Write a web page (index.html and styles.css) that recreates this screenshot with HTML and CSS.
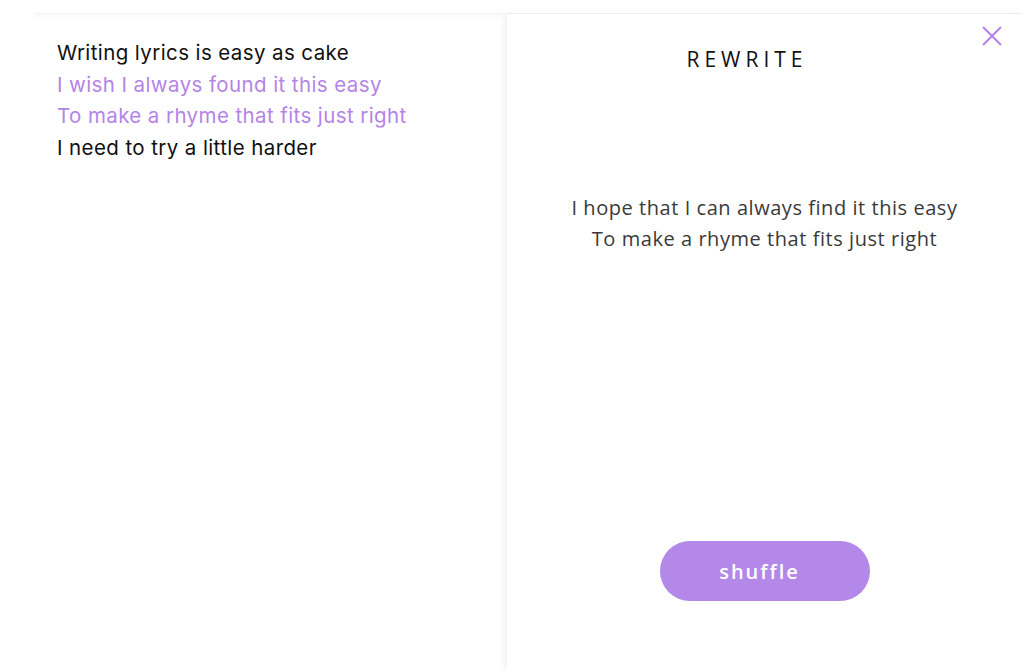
FILE: index.html
```html
<!DOCTYPE html>
<html>
<head>
<meta charset="utf-8">
<link rel="stylesheet" href="styles.css">
</head>
<body>
<div class="app">
  <section class="editor">
    <p class="line">Writing lyrics is easy as cake</p>
    <p class="line selected">I wish I always found it this easy</p>
    <p class="line selected">To make a rhyme that fits just right</p>
    <p class="line">I need to try a little harder</p>
  </section>
  <aside class="rewrite">
    <header class="rewrite-header">
      <h1 class="rewrite-title">REWRITE</h1>
      <button class="close" aria-label="Close">
        <svg width="20" height="20" viewBox="0 0 20 20"><path d="M1 1 L19 19 M19 1 L1 19" stroke="#b183e6" stroke-width="2" fill="none"/></svg>
      </button>
    </header>
    <div class="suggestion">
      <p>I hope that I can always find it this easy</p>
      <p>To make a rhyme that fits just right</p>
    </div>
    <div class="actions">
      <button class="shuffle">shuffle</button>
    </div>
  </aside>
</div>
</body>
</html>
```

FILE: styles.css
```css
html, body {
  margin: 0;
  padding: 0;
  background: #fff;
  height: 100%;
  overflow: hidden;
}
.app {
  display: flex;
  padding: 13px 0 0 35px;
  height: 672px;
  box-sizing: border-box;
}
.editor {
  width: 472px;
  padding: 24px 0 0 22px;
  box-sizing: border-box;
  box-shadow: inset 0 8px 8px -8px rgba(0,0,0,0.08);
  font-family: Inter, "Liberation Sans", sans-serif;
  font-size: 20.5px;
  color: #111;
}
.line {
  margin: 0;
  line-height: 31.5px;
  letter-spacing: 0.4px;
}
.line.selected {
  color: #b584e6;
}
.rewrite {
  width: 515px;
  border-top: 1px solid #ececec;
  box-shadow: -5px 0 7px -3px rgba(0,0,0,0.07);
  display: flex;
  flex-direction: column;
  font-family: "Open Sans", Lato, sans-serif;
}
.rewrite-header {
  display: flex;
  align-items: flex-start;
  padding-right: 20px;
}
.rewrite-title {
  flex: 1;
  margin: 0;
  padding: 31px 0 0 5px;
  text-align: center;
  font-weight: 400;
  font-size: 21px;
  letter-spacing: 5px;
  color: #111;
  line-height: 28px;
}
.close {
  margin-top: 12px;
  padding: 0;
  border: none;
  background: none;
  width: 20px;
  height: 20px;
  cursor: pointer;
}
.close svg { display: block; }
.suggestion {
  margin-top: 119px;
  text-align: center;
  font-size: 20px;
  letter-spacing: 0.55px;
  color: #3a3a3a;
  line-height: 31px;
}
.suggestion p { margin: 0; }
.actions {
  margin-top: auto;
  display: flex;
  justify-content: center;
  padding-bottom: 71px;
}
.shuffle {
  width: 210px;
  height: 60px;
  border: none;
  border-radius: 30px;
  background: #b388e8;
  color: #fff;
  font-family: "Open Sans", Lato, sans-serif;
  font-size: 20px;
  letter-spacing: 2px;
  font-weight: 600;
  padding: 0 10px 0 0;
}
```
